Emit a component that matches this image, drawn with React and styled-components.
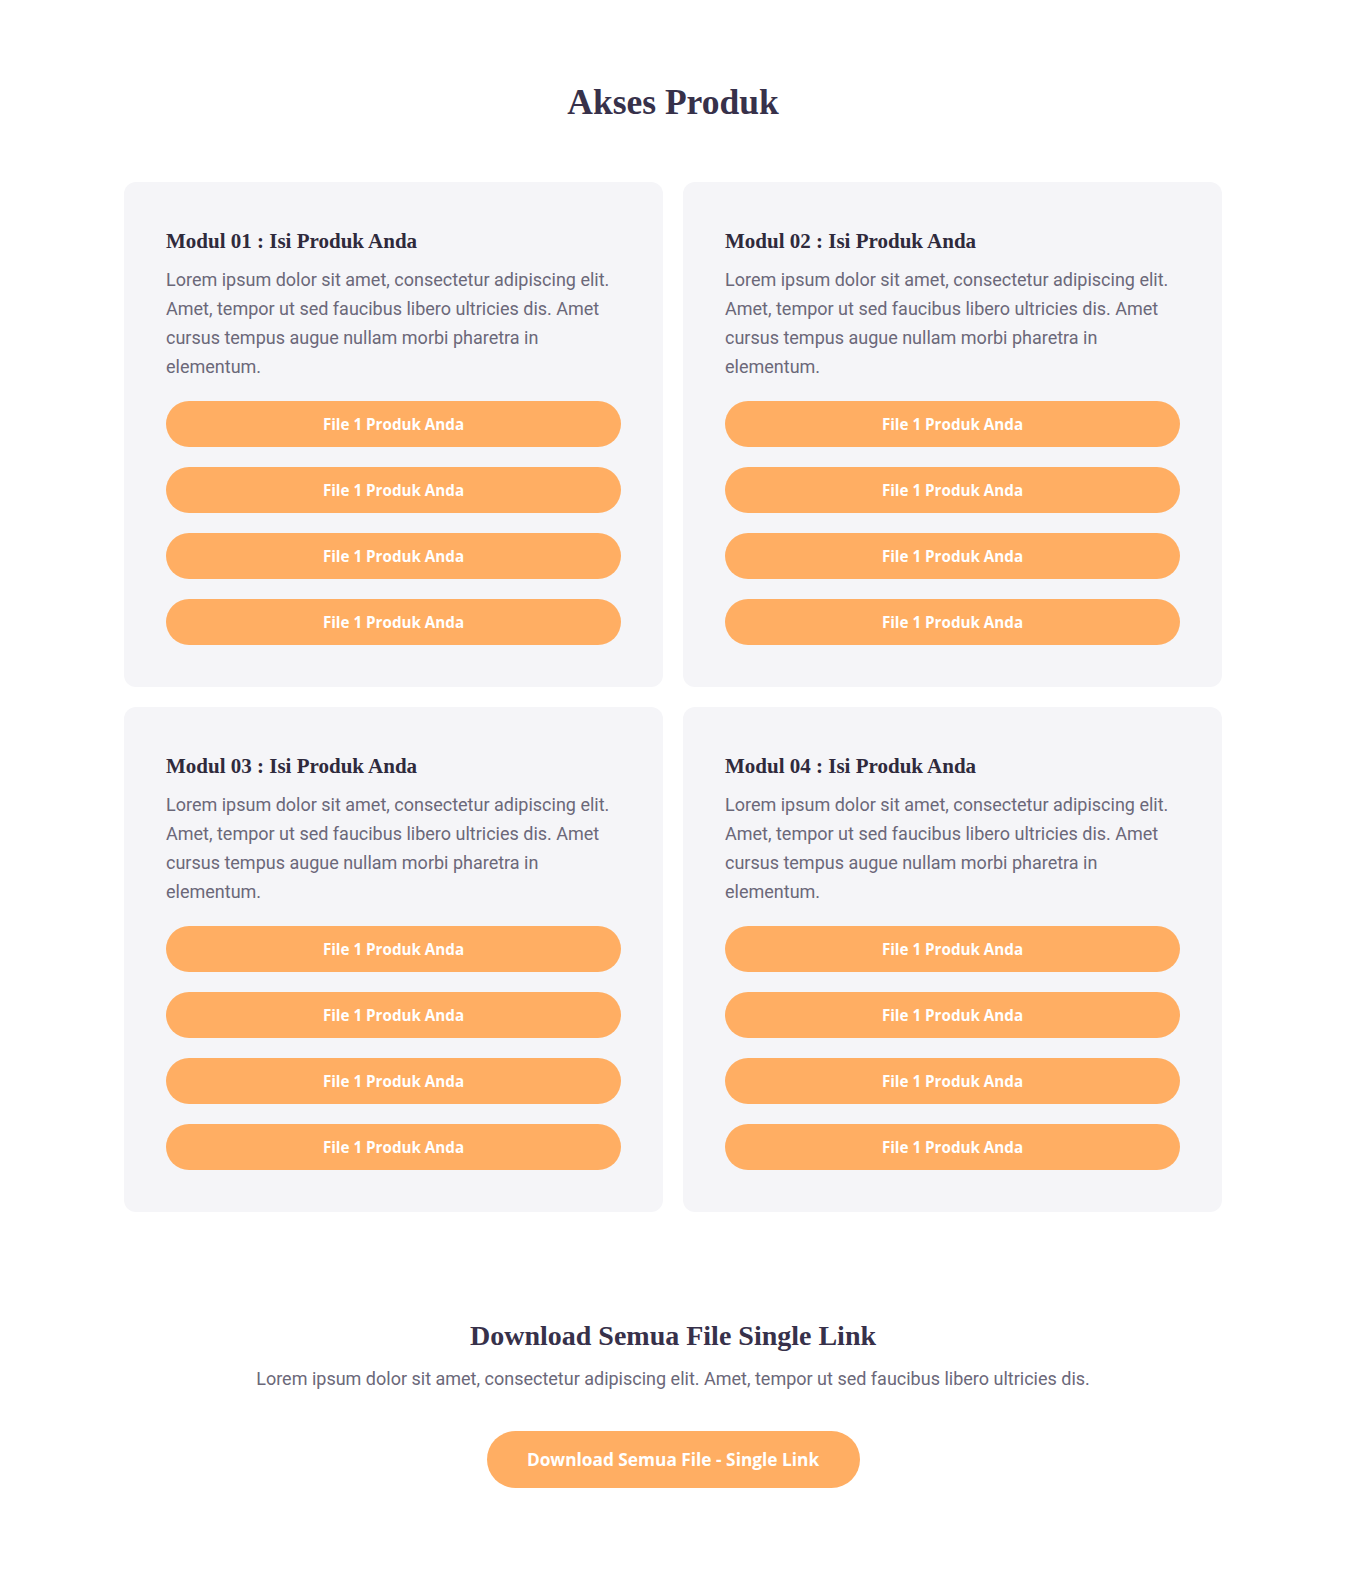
import React from "react";
import styled, {createGlobalStyle} from "styled-components";

const Global = createGlobalStyle`
  body {
    margin: 0;
    background: #ffffff;
    font-family: Roboto, "Liberation Sans", sans-serif;
  }
  * { box-sizing: border-box; }
`;

const Page = styled.div`
  width: 100%;
  display: flex;
  flex-direction: column;
  align-items: center;
  padding: 78px 0 82px;
`;

const Title = styled.h1`
  margin: 0;
  font-family: "Liberation Serif", "DejaVu Serif", serif;
  font-weight: 700;
  font-size: 35.5px;
  line-height: 48px;
  color: #37314a;
`;

const Grid = styled.div`
  margin-top: 56px;
  width: 1098px;
  display: grid;
  grid-template-columns: 1fr 1fr;
  gap: 20px;
`;

const Card = styled.div`
  background: #f5f5f8;
  border-radius: 12px;
  padding: 42px;
  display: flex;
  flex-direction: column;
`;

const CardTitle = styled.h3`
  margin: 2px 0 0;
  font-family: "Liberation Serif", "DejaVu Serif", serif;
  font-weight: 700;
  font-size: 21px;
  line-height: 30px;
  color: #2f2a3c;
`;

const Text = styled.p`
  margin: ${p => p.$center ? "8px 0 0" : "9px 0 0"};
  font-size: 18px;
  line-height: 29px;
  color: #6b6879;
  text-align: ${p => p.$center ? "center" : "left"};
`;

const Buttons = styled.div`
  margin-top: 20px;
  display: flex;
  flex-direction: column;
  gap: 20px;
`;

const FileButton = styled.a`
  display: flex;
  align-items: center;
  justify-content: center;
  height: 46px;
  border-radius: 23px;
  background: #ffae63;
  color: #ffffff;
  font-family: "Open Sans", Lato, sans-serif;
  font-weight: 700;
  font-size: 15.2px;
  text-decoration: none;
`;

const Bottom = styled.section`
  margin-top: 104px;
  display: flex;
  flex-direction: column;
  align-items: center;
`;

const SubTitle = styled.h2`
  margin: 0;
  font-family: "Liberation Serif", "DejaVu Serif", serif;
  font-weight: 700;
  font-size: 28px;
  line-height: 40px;
  color: #37314a;
`;

const BigButton = styled.a`
  margin-top: 38px;
  display: flex;
  align-items: center;
  justify-content: center;
  width: 373px;
  height: 57px;
  border-radius: 29px;
  background: #ffae63;
  color: #ffffff;
  font-family: "Open Sans", Lato, sans-serif;
  font-weight: 700;
  font-size: 17.3px;
  text-decoration: none;
`;

const lorem =
  "Lorem ipsum dolor sit amet, consectetur adipiscing elit. Amet, tempor ut sed faucibus libero ultricies dis. Amet cursus tempus augue nullam morbi pharetra in elementum.";

const modules = ["01", "02", "03", "04"];

export default function App() {
  return (
    <>
      <Global />
      <Page>
        <Title>Akses Produk</Title>
        <Grid>
          {modules.map(m => (
            <Card key={m}>
              <CardTitle>Modul {m} : Isi Produk Anda</CardTitle>
              <Text>{lorem}</Text>
              <Buttons>
                {[1, 2, 3, 4].map(i => (
                  <FileButton key={i} href="#">File 1 Produk Anda</FileButton>
                ))}
              </Buttons>
            </Card>
          ))}
        </Grid>
        <Bottom>
          <SubTitle>Download Semua File Single Link</SubTitle>
          <Text $center>
            Lorem ipsum dolor sit amet, consectetur adipiscing elit. Amet, tempor ut sed faucibus libero ultricies dis.
          </Text>
          <BigButton href="#">Download Semua File - Single Link</BigButton>
        </Bottom>
      </Page>
    </>
  );
}
